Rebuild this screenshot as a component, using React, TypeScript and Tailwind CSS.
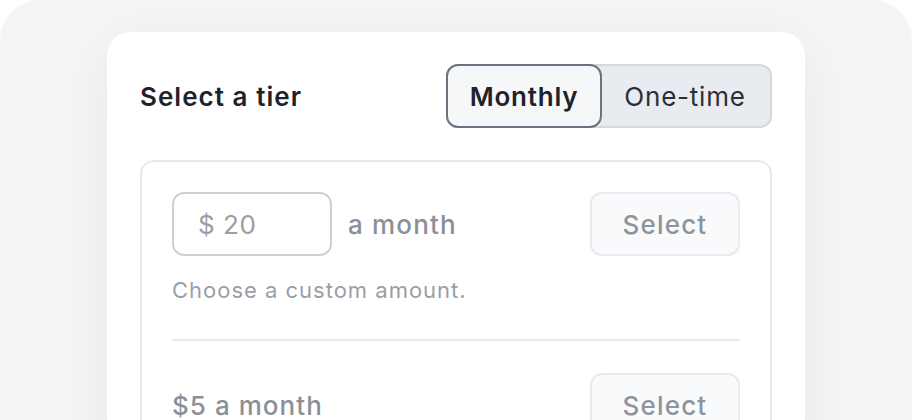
// Tier picker card — monthly / one-time toggle with custom amount row.

const font = { fontFamily: "Inter, 'Noto Sans', sans-serif" };

function SelectButton() {
  return (
    <button className="h-16 w-[150px] shrink-0 rounded-xl border-2 border-[#e8eaee] bg-[#f9fafb] text-[26px] font-medium tracking-[0.045em] text-[#8f949c]">
      Select
    </button>
  );
}

export default function App() {
  return (
    <div style={font} className="h-[420px] overflow-hidden bg-white">
      <div className="h-[520px] rounded-[40px] bg-[#f4f5f7] pt-8">
        <div className="mx-auto w-[698px] rounded-[24px] bg-white px-[33px] pt-8 pb-10 shadow-[0_10px_60px_rgba(15,23,42,0.06)]">
          <header className="flex h-16 items-center justify-between">
            <h2 className="text-[26px] font-semibold tracking-[0.04em] text-[#1f2329]">
              Select a tier
            </h2>
            <div className="flex h-16 w-[326px] rounded-xl border-2 border-[#d3d8de] bg-[#e8ebef]">
              <button className="-m-[2px] h-16 w-[156px] rounded-xl border-2 border-[#6b7280] bg-[#f6f7f9] text-[26px] font-semibold tracking-[0.03em] text-[#1f2329]">
                Monthly
              </button>
              <button className="flex-1 text-[26px] tracking-[0.03em] text-[#2b3038]">
                One-time
              </button>
            </div>
          </header>

          <div className="mt-8 rounded-[14px] border-2 border-[#e7e9ed] px-[30px] pt-[30px]">
            <div className="flex items-center justify-between">
              <div className="flex items-center gap-4">
                <div className="flex h-16 w-[160px] items-center rounded-xl border-2 border-[#cdd1d6] px-6 text-[26px] tracking-[0.02em] text-[#9a9ea5]">
                  $ 20
                </div>
                <span className="text-[26px] font-medium tracking-[0.045em] text-[#8b9098]">a month</span>
              </div>
              <SelectButton />
            </div>
            <p className="mt-[18px] text-[22px] tracking-[0.045em] text-[#9a9ea5]">Choose a custom amount.</p>

            <div className="mt-[32px] h-[2px] bg-[#e8eaee]" />

            <div className="flex items-center justify-between pt-8">
              <span className="text-[26px] font-medium tracking-[0.04em] text-[#8b9098]">$5 a month</span>
              <SelectButton />
            </div>
          </div>
        </div>
      </div>
    </div>
  );
}
